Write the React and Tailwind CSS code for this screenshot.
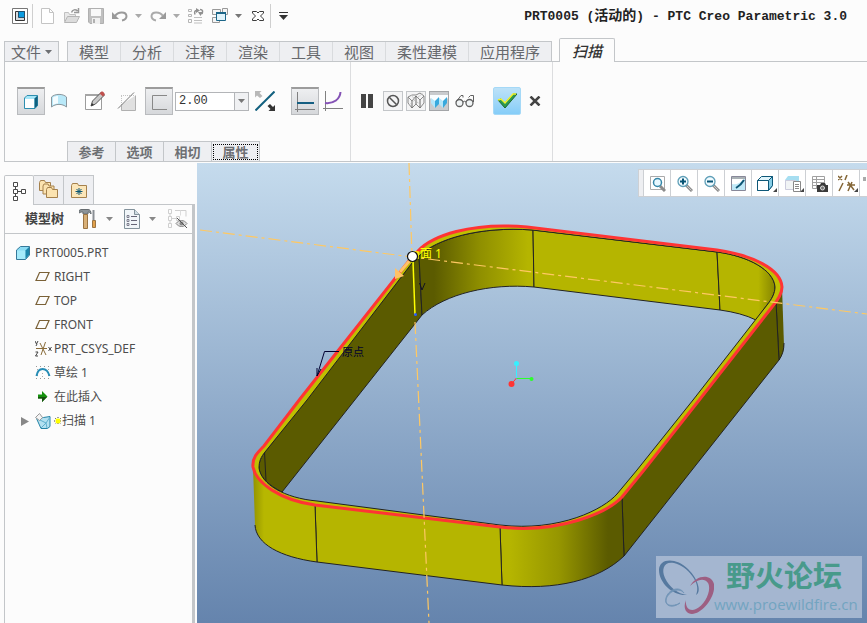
import { useState } from 'react'
import clsx from 'clsx'

const RIBBON_TABS = ['模型', '分析', '注释', '渲染', '工具', '视图', '柔性建模', '应用程序']
const PANEL_TABS = ['参考', '选项', '相切', '属性']

const TREE = [
  { label: 'RIGHT', icon: PlaneIcon },
  { label: 'TOP', icon: PlaneIcon },
  { label: 'FRONT', icon: PlaneIcon },
  { label: 'PRT_CSYS_DEF', icon: CsysIcon },
  { label: '草绘 1', icon: SketchIcon },
  { label: '在此插入', icon: InsertIcon },
  { label: '扫描 1', icon: SweepIcon, expandable: true, fresh: true },
]

const VIEW_TOOLS = [
  { label: '重新调整', icon: RefitIcon },
  { label: '放大', icon: ZoomInIcon },
  { label: '缩小', icon: ZoomOutIcon },
  { label: '重画', icon: RepaintIcon },
  { label: '显示样式', icon: ShadedIcon, menu: true },
  { label: '已保存方向', icon: SavedViewIcon, menu: true },
  { label: '视图管理器', icon: ViewManagerIcon },
  { label: '基准显示过滤器', icon: DatumIcon, menu: true },
]

/* ── Icons ─────────────────────────────────────────────────────────── */

function Svg({ w = 16, h = 16, children }) {
  return (
    <svg width={w} height={h} viewBox={`0 0 ${w} ${h}`} fill="none" className="block shrink-0" aria-hidden="true">
      {children}
    </svg>
  )
}

function Caret({ color = '#8a8a8a' }) {
  return (
    <Svg w={7} h={4}>
      <path d="M0 0h7L3.5 4z" fill={color} />
    </Svg>
  )
}

function AppIcon() {
  return (
    <Svg>
      <path d="M.5.5h15v15H.5z" fill="#fff" stroke="#777" />
      <path d="M3.5 3.5h9v9h-9z" fill="#d5dade" stroke="#333" />
      <path d="M6.500 3.500h6v6h-6z" fill="#0a9be0" stroke="#22506e" />
    </Svg>
  )
}

function NewIcon() {
  return (
    <Svg>
      <path d="M1.500.500h8l4 4v11h-12z" fill="#fff" stroke="#c4c4c4" />
      <path d="M9.500.500v4h4" stroke="#c4c4c4" />
    </Svg>
  )
}

function OpenIcon() {
  return (
    <Svg>
      <path d="M.5 13.500v-9h4l1 2h6v2" fill="#e8e8e8" stroke="#c0c0c0" />
      <path d="M.5 14.500l3-6h12l-3 6z" fill="#dcdcdc" stroke="#b5b5b5" />
      <path d="M7.500 4.500c1-3 4-3.500 6-1.500M14.500 0v4.500H10" stroke="#999" strokeWidth="1.500" />
    </Svg>
  )
}

function SaveIcon() {
  return (
    <Svg>
      <path d="M.5.5h15v15H2L.5 14z" fill="#c0c0c0" stroke="#b0b0b0" />
      <path d="M3 1h10v7H3z" fill="#f8f8f8" />
      <path d="M4 10h8v6H4z" fill="#f0f0f0" />
      <path d="M5 11h2v4H5z" fill="#b0b0b0" />
    </Svg>
  )
}

function UndoIcon() {
  return (
    <Svg>
      <path d="M0 4v7h7z" fill="#9a9a9a" />
      <path d="M3 8c3-4.500 11-5 11.500 0 0 2.500-2 4-4.500 4.500" stroke="#9a9a9a" strokeWidth="2" />
    </Svg>
  )
}

function RedoIcon() {
  return (
    <Svg>
      <path d="M16 4v7H9z" fill="#9a9a9a" />
      <path d="M13 8c-3-4.500-11-5-11.500 0 0 2.500 2 4 4.500 4.500" stroke="#aaa" strokeWidth="2" />
    </Svg>
  )
}

function RegenIcon() {
  return (
    <Svg>
      <path d="M.5 1.500h3v2h-3zM.5 6.500h3v2h-3zM.5 11.500h3v3h-3z" stroke="#b5b5b5" />
      <path d="M6 9.500h8M6 12.500h8M6 15h8" stroke="#c0c0c0" />
      <path d="M7 6.500c-1-3 0-4 2-4M12 1.500c3 0 3 2 2 4.500" stroke="#909090" strokeWidth="1.500" />
      <path d="M8 0l4 2.500L8 5zM10 4h5l-2.500 4z" fill="#909090" />
    </Svg>
  )
}

function WindowsIcon() {
  return (
    <Svg>
      <path d="M.5 1.500h8v5h-8zM10.500.500h5v6h-5zM.5 9.500h7v5h-7z" fill="#f5f5f5" stroke="#999" />
      <path d="M4.500 4.500h9v8h-9z" fill="#e0f3fb" stroke="#1c6688" />
      <path d="M4 5h10" stroke="#1c6688" strokeWidth="2" />
    </Svg>
  )
}

function CloseWindowIcon() {
  return (
    <Svg>
      <path
        d="M2.500 3.500h4L8 5l1.500-1.500h4V5l-3 3 3 3v1.500h-4L8 11l-1.500 1.500h-4V11l3-3-3-3z"
        fill="#fff"
        stroke="#3c3c3c"
      />
    </Svg>
  )
}

function SolidIcon() {
  return (
    <Svg w={18} h={18}>
      <path d="M2.500 5l2.500-2.500h10.500v10L13 15.500H2.500z" fill="#a6e6f8" stroke="#2f8fb0" />
      <path d="M3 6h9v9H3z" fill="#fff" />
      <path d="M12.500 5.500l3-3v10l-3 3z" fill="#11607f" />
    </Svg>
  )
}

function SurfaceIcon() {
  return (
    <Svg w={18} h={18}>
      <path d="M1.500 5C5 1.500 13 1.500 16.500 5v10c-4-3.500-11-3.500-15 0z" fill="#b9e9f9" stroke="#8a979e" />
      <path d="M3 5.500c1.500-1 3-1.500 5-1.500v7.500c-2 0-3.500.5-5 1.500z" fill="#f4fcff" />
    </Svg>
  )
}

function EditSketchIcon() {
  return (
    <Svg w={22} h={22}>
      <path d="M1.500 5.500h16v14h-16z" fill="#fff" stroke="#9c9c9c" />
      <path d="M1 5h17" stroke="#a5a5a5" strokeWidth="2" />
      <path d="M7 16l1.500-5 9-9 3 3-9 9z" fill="#c9c9c9" stroke="#555" />
      <path d="M7 16l1-3 2 2z" fill="#333" />
      <path d="M17 2c1-1.500 4.500 1 3.500 3l-1.500 1.500-3.500-3z" fill="#c0504d" />
    </Svg>
  )
}

function RemoveMaterialIcon() {
  return (
    <Svg w={20} h={20}>
      <path d="M18.500 4.500v15h-14v-6z" fill="#e0e0e0" />
      <path d="M18.500 4.500v15h-14v-5" stroke="#b0b0b0" />
      <path d="M4 4.500h14M4.500 5v9" stroke="#c4c4c4" strokeDasharray="1 1" />
      <path d="M1 17.500L17 1.500" stroke="#777" />
    </Svg>
  )
}

function ThinIcon() {
  return (
    <Svg w={18} h={18}>
      <path d="M17 2.500H2.500v14H17" stroke="#888" />
    </Svg>
  )
}

function FlipIcon() {
  return (
    <Svg w={20} h={20}>
      <path d="M.5 19.500l19-19" stroke="#12607f" strokeWidth="2" />
      <path d="M0 0h6.500L4.500 2l3 3L5 7 2 4.500 0 6.500z" fill="#b8b8b8" />
      <path d="M20 20h-6.500l2-2-3-3L15 13l3 3 2-2z" fill="#333" />
    </Svg>
  )
}

function ConstantSectionIcon() {
  return (
    <Svg w={20} h={20}>
      <path d="M2.500 0v20M0 17.500h20" stroke="#808080" />
      <path d="M2 11h17" stroke="#155f82" strokeWidth="2" />
    </Svg>
  )
}

function VariableSectionIcon() {
  return (
    <Svg w={20} h={20}>
      <path d="M2.500 0v20M0 17.500h20" stroke="#808080" />
      <path d="M2 12c9 1 15-4 15.500-11" stroke="#8452b5" strokeWidth="2" />
    </Svg>
  )
}

function PauseIcon() {
  return (
    <Svg w={12} h={14}>
      <path d="M0 0h5v14H0zM7 0h5v14H7z" fill="#454545" />
    </Svg>
  )
}

function NoPreviewIcon() {
  return (
    <Svg w={18} h={18}>
      <circle cx="9" cy="9" r="5.500" stroke="#555" strokeWidth="1.500" />
      <path d="M5.500 5.500l7 7" stroke="#555" strokeWidth="1.500" />
    </Svg>
  )
}

function WirePreviewIcon() {
  return (
    <Svg w={18} h={18}>
      <path d="M1 5l4-2h4l4-2 4 3M1 5v6l4 5 4-4 4 4 4-5V4l-4 4-4-4-4 5z" stroke="#888" />
      <path d="M5 9v7M9 4v8M13 8v8" stroke="#666" />
      <path d="M4 3l9 10M2 13l14-12" stroke="#bbb" strokeDasharray="2 1" />
    </Svg>
  )
}

function ShadedPreviewIcon() {
  return (
    <Svg w={18} h={18}>
      <path d="M0 3h18v3l-5 5-4-5-4 5-5-5z" fill="#fafdff" />
      <path d="M1 6l4 3v7l-4-5zM9 6l4 3v7l-4-4z" fill="#b4e6fa" />
      <path d="M5 9l4-4v7l-4 4zM13 9l4-4v6l-4 5z" fill="#38a9dd" />
    </Svg>
  )
}

function GlassesIcon() {
  return (
    <Svg w={20} h={14}>
      <circle cx="4.500" cy="9" r="3.500" fill="#f1f5f6" stroke="#606060" strokeWidth="1.300" />
      <circle cx="14.500" cy="9" r="3.500" fill="#f1f5f6" stroke="#606060" strokeWidth="1.300" />
      <path d="M8 8q1.500-1.500 3 0M1 8L6 1.500h2v2M18.500 8V1.500h-3l-2 2" stroke="#606060" />
    </Svg>
  )
}

function CheckIcon() {
  return (
    <Svg w={20} h={16}>
      <path d="M1 7l3-1 4 4L16 1h4L8 15z" fill="#2c9a51" stroke="#20682f" />
      <path d="M1 7l3-1 4 4L16 1h3" stroke="#f3f32c" strokeWidth="1.500" />
    </Svg>
  )
}

function CancelIcon() {
  return (
    <Svg w={12} h={10}>
      <path d="M1.500.500l9 9M10.500.500l-9 9" stroke="#444" strokeWidth="2.500" />
    </Svg>
  )
}

function TreeIcon() {
  return (
    <Svg w={14} h={20}>
      <path d="M1.500 1.500h4v4h-4zM1.500 8.500h4v4h-4zM9.500 8.500h4v4h-4zM1.500 15.500h4v4h-4z" fill="#fff" stroke="#4a4a4a" />
      <path d="M3.500 6v2M3.500 13v2M6 10.500h3" stroke="#4a4a4a" />
    </Svg>
  )
}

function FoldersIcon() {
  return (
    <Svg w={20} h={20}>
      {[0, 3.5, 7].map((d) => (
        <path key={d} d={`M${d + 0.5} ${d + 2.5}l1-2h4l1 2h5v8h-11z`} fill="#fbe3b0" stroke="#a5814c" />
      ))}
    </Svg>
  )
}

function FavoritesIcon() {
  return (
    <Svg w={18} h={16}>
      <path d="M1.500 3.500l1-2h5l1 2h8v12h-15z" fill="#fbe6b9" stroke="#a5814c" />
      <path d="M9 6v7M5.500 9.500h7M6.500 7l5 5M11.500 7l-5 5" stroke="#0a5775" />
    </Svg>
  )
}

function ToolsIcon() {
  return (
    <Svg w={18} h={20}>
      <path d="M0 1.500l2-1h7c2 0 3 1.500 3 4.500-1-1.500-2-2-3-2v2H4v-2H2l-2 1z" fill="#8d9499" stroke="#666c70" />
      <path d="M4.500 5.500h4v14h-4z" fill="#d9b077" stroke="#9b7443" />
      <path d="M14.500 1v10" stroke="#8a8f94" strokeWidth="2" />
      <path d="M13.500 11.500h3v7h-3z" fill="#e2a14a" stroke="#9b7443" />
    </Svg>
  )
}

function ListIcon() {
  return (
    <Svg w={16} h={20}>
      <path d="M.5.5h10l5 5v14H.500z" fill="#f1f6f9" stroke="#83929b" />
      <path d="M10.500.500v5h5" fill="#cfdde4" stroke="#83929b" />
      <path d="M7 7.500h6M7 11.500h6M7 15.500h6" stroke="#667" />
      <path d="M3 6.500h2v2H3zM3 10.500h2v2H3zM3 14.500h2v2H3z" stroke="#667" strokeWidth=".8" />
    </Svg>
  )
}

function HideIcon() {
  return (
    <Svg w={21} h={20}>
      <path d="M1.500.500h3v4h-3zM1.500 7.500h3v4h-3zM1.500 14.500h3v4h-3zM9.500 7.500h3v4h-3zM3 5v2M3 12v2M5 9.500h4M8 1.500h11v6" stroke="#cfcfcf" />
      <path d="M13.500 1.500v5" stroke="#ddd" />
      <path d="M9 14.500c3-4 8-4 11 0-3 4-8 4-11 0z" fill="#ddd" stroke="#888" />
      <circle cx="14.500" cy="14.500" r="2" fill="#888" />
      <path d="M10 9l10 10" stroke="#555" />
    </Svg>
  )
}

function PartIcon() {
  return (
    <Svg w={14} h={14}>
      <path d="M.5 4l4-3.500h9V9l-4 4.500h-9z" fill="#8bdcf4" stroke="#36799a" />
      <path d="M1 4.500h8.500V13H1z" fill="#a5ebfb" />
      <path d="M9.500 4.500l3.500-3.500V9l-3.500 4z" fill="#1d86ab" />
    </Svg>
  )
}

function PlaneIcon() {
  return (
    <Svg>
      <path d="M4.500 3.500h9.500l-3.500 8H1z" stroke="#7a6137" strokeWidth="1.200" />
    </Svg>
  )
}

function CsysIcon() {
  return (
    <Svg w={17} h={16}>
      <path d="M1 7.500h11M5 2l6 12M10.500 1L6 14" stroke="#8a6d3b" />
      <path d="M0 0l1.500 3L3 0M2 3l-1 2M.5 11H3L.5 15H3M13.500 6l3 4M16.500 6l-3 4" stroke="#444" />
    </Svg>
  )
}

function SketchIcon() {
  return (
    <Svg>
      <path d="M1 1.500h14M1 13.500h14" stroke="#999" strokeDasharray="1 3" />
      <path d="M2.500 4v8M13.500 4v8M7.500 8v5" stroke="#aaa" strokeDasharray="1 2" />
      <path d="M1.500 11C3 1.500 12 1.500 14.500 11" stroke="#268cb5" strokeWidth="2" />
    </Svg>
  )
}

function InsertIcon() {
  return (
    <Svg>
      <path d="M3 5.500h4V2l5.500 5.500L7 13V9.500H3z" fill="#15910d" />
      <path d="M3 8h9L7 13V9.500H3z" fill="#17500f" />
    </Svg>
  )
}

function SweepIcon() {
  return (
    <Svg>
      <path d="M1.500 5.500l7-1 6.500-1v10L12.500 15.500H6z" fill="#b3e1f1" stroke="#2583a6" />
      <path d="M3 6l8 4 4-6M11 10l1 5M6 15l5-5" stroke="#5eafcd" />
      <path d="M.5 4.500l4-4 3 4-3 3z" fill="#f4f4f4" stroke="#999" />
    </Svg>
  )
}

function FreshIcon() {
  return (
    <Svg w={8} h={8}>
      <path d="M4 0v8M0 4h8M1 1l6 6M7 1L1 7" stroke="#444" strokeDasharray="1 1" />
      <path d="M4 1.500v5M1.500 4h5M2 2l4 4M6 2L2 6" stroke="#ff0" strokeWidth="1.500" />
    </Svg>
  )
}

function Lens({ children }) {
  return (
    <>
      <path d="M10 10l6 6" stroke="#8c8c8c" strokeWidth="3" />
      <path d="M10.500 10.500l5 5" stroke="#c9c9c9" />
      <circle cx="7" cy="6.500" r="5" fill="#f0fbff" stroke="#5f9fb8" strokeWidth="1.300" />
      {children}
    </>
  )
}

function RefitIcon() {
  return (
    <Svg w={17} h={17}>
      <path d="M1.500 1.500h14v13h-14z" stroke="#aaa" />
      <path d="M11 11l5 5" stroke="#8c8c8c" strokeWidth="3" />
      <circle cx="8.500" cy="7.500" r="4" fill="#e8f8ff" stroke="#3486a8" strokeWidth="1.500" />
    </Svg>
  )
}

function ZoomInIcon() {
  return (
    <Svg w={17} h={17}>
      <Lens><path d="M7 3.500v6M4 6.500h6" stroke="#075374" strokeWidth="2" /></Lens>
    </Svg>
  )
}

function ZoomOutIcon() {
  return (
    <Svg w={17} h={17}>
      <Lens><path d="M4 6.500h6" stroke="#075374" strokeWidth="2" /></Lens>
    </Svg>
  )
}

function RepaintIcon() {
  return (
    <Svg w={17} h={17}>
      <path d="M1.500 1.500h14v14h-14z" fill="#fff" stroke="#889" />
      <path d="M2 2h13v2H2z" fill="#a9b1b5" />
      <path d="M2 15V9c4 1 9-1 12-5h1v11z" fill="#bfe8f7" />
      <path d="M6 13q5-3 8-8" stroke="#0d5574" strokeWidth="2" />
    </Svg>
  )
}

function ShadedIcon() {
  return (
    <Svg w={17} h={17}>
      <path d="M.5 5.500l4-4h11v9l-4 5H.500z" fill="#dff4fb" stroke="#0e5878" />
      <path d="M11.500 5.500l4-4v9l-4 5z" fill="#86cde6" stroke="#0e5878" />
      <path d="M.5 5.500h11v10H.500z" fill="#fff" stroke="#0e5878" />
    </Svg>
  )
}

function SavedViewIcon() {
  return (
    <Svg w={17} h={17}>
      <path d="M1 5l3-4h11v10l-3 3H1z" fill="#a6def1" />
      <path d="M1.500 5.500h10v9h-10z" fill="#f1f4f5" stroke="#ccd" />
      <path d="M9.500 6.500h7v10h-7z" fill="#fff" stroke="#888" />
      <path d="M11 9.500h4M11 11.500h4M11 13.500h4" stroke="#888" />
    </Svg>
  )
}

function ViewManagerIcon() {
  return (
    <Svg w={17} h={17}>
      <path d="M1.500 1.500h12v12h-12zM1 4.500h13M1 7.500h13M1 10.500h13M5.500 1v13" stroke="#a0a0a0" />
      <path d="M6 10h3l1-2h4l1 2h2v7H6z" fill="#3a3a3a" />
      <circle cx="11.500" cy="13" r="2" fill="#777" stroke="#ddd" />
    </Svg>
  )
}

function DatumIcon() {
  return (
    <Svg w={17} h={17}>
      <path d="M0 1l4 4M4 1L0 5M9 0l-2 5M5 8l-4 8M9 10h8M10 16l4-9M10 7l6 8" stroke="#846636" strokeWidth="1.500" />
    </Svg>
  )
}

/* ── Shared controls ───────────────────────────────────────────────── */

function IconButton({ label, className, children }) {
  return (
    <button
      type="button"
      aria-label={label}
      title={label}
      className={clsx('flex shrink-0 items-center justify-center', className)}
    >
      {children}
    </button>
  )
}

function ToolButton({ label, pressed, children }) {
  return (
    <IconButton
      label={label}
      className={clsx(
        'size-7',
        pressed && 'border border-t-2 border-[#b9bbbe] border-t-[#9c9c9c] bg-linear-to-b from-[#eeeff1] to-[#d6d8db]'
      )}
    >
      {children}
    </IconButton>
  )
}

function SplitIcon({ label, color, gap = 'gap-[7px]', children }) {
  return (
    <IconButton label={label} className={gap}>
      {children}
      <Caret color={color} />
    </IconButton>
  )
}

/* ── Header ────────────────────────────────────────────────────────── */

function TitleBar() {
  return (
    <header className="flex h-8 items-center pl-3 pr-5">
      <div className="flex items-center gap-1">
        <IconButton label="PTC Creo"><AppIcon /></IconButton>
        <span className="h-6 w-px bg-[#cfcfcf]" />
      </div>
      <div className="ml-[7px] flex items-center gap-2">
        <IconButton label="新建"><NewIcon /></IconButton>
        <IconButton label="打开"><OpenIcon /></IconButton>
        <IconButton label="保存"><SaveIcon /></IconButton>
        <SplitIcon label="撤消" color="#aaa"><UndoIcon /></SplitIcon>
        <SplitIcon label="重做" color="#aaa"><RedoIcon /></SplitIcon>
        <IconButton label="重新生成"><RegenIcon /></IconButton>
        <SplitIcon label="窗口" color="#777"><WindowsIcon /></SplitIcon>
        <IconButton label="关闭"><CloseWindowIcon /></IconButton>
      </div>
      <span className="ml-1 h-6 w-px bg-[#cfcfcf]" />
      <IconButton label="自定义快速访问工具栏" className="ml-2">
        <Svg w={9} h={8}>
          <path d="M0 .5h9" stroke="#333" />
          <path d="M0 3h9L4.500 8z" fill="#333" />
        </Svg>
      </IconButton>
      <h1 className="ml-auto whitespace-nowrap font-['Liberation_Mono','Noto_Sans_CJK_SC',monospace] text-[13px] font-bold text-[#222]">
        PRT0005 (<span className="text-[14px]">活动的</span>) - PTC Creo Parametric 3.0
      </h1>
    </header>
  )
}

function RibbonTabs() {
  return (
    <nav className="flex h-[29px] items-end pl-1 text-[15px] leading-[18px] text-[#66686c]">
      <button type="button" className="flex h-5 w-[55px] items-center justify-center gap-1 border border-b-0 border-[#c3c6c9] bg-[#eeeff2]">
        文件
        <Caret color="#6d6f73" />
      </button>
      <div className="ml-2 flex h-5 divide-x divide-[#d9dbde] border border-b-0 border-[#c3c6c9] bg-[#eeeff2]">
        {RIBBON_TABS.map((tab) => (
          <button key={tab} type="button" className="px-[11px]">{tab}</button>
        ))}
      </div>
      <button
        type="button"
        className="relative -mb-px ml-[7px] h-6 w-14 rounded-t-xs border border-b-0 border-[#c3c6c9] bg-[#fcfcfc] font-medium italic text-[#333]"
      >
        扫描
      </button>
    </nav>
  )
}

function SweepDashboard() {
  const [thickness, setThickness] = useState('2.00')
  const [panel, setPanel] = useState('属性')

  return (
    <section className="ml-1 flex h-[101px] border-y border-l border-[#c3c6c9]">
      <div className="flex w-[346px] flex-col justify-between border-r border-[#dcdddf] pl-3 pt-[25px]">
        <div className="flex items-center">
          <ToolButton label="扫描为实体" pressed><SolidIcon /></ToolButton>
          <ToolButton label="扫描为曲面"><SurfaceIcon /></ToolButton>
          <div className="ml-2 flex items-center gap-1">
            <ToolButton label="编辑截面"><EditSketchIcon /></ToolButton>
            <ToolButton label="移除材料"><RemoveMaterialIcon /></ToolButton>
            <ToolButton label="薄板特征" pressed><ThinIcon /></ToolButton>
          </div>
          <div className="mx-[2px] flex h-[19px] w-[74px] border border-[#b3b5b8]">
            <input
              aria-label="厚度"
              value={thickness}
              onChange={(e) => setThickness(e.target.value)}
              className="min-w-0 flex-1 bg-white pl-[3px] font-['Liberation_Mono',monospace] text-[12px] text-[#333] outline-none"
            />
            <IconButton label="厚度列表" className="w-[14px] border-l border-[#b3b5b8] bg-[#f0f1f3]">
              <Caret color="#777" />
            </IconButton>
          </div>
          <ToolButton label="反向"><FlipIcon /></ToolButton>
          <div className="ml-3 flex">
            <ToolButton label="恒定截面" pressed><ConstantSectionIcon /></ToolButton>
            <ToolButton label="可变截面"><VariableSectionIcon /></ToolButton>
          </div>
        </div>
        <div className="ml-[50px] flex text-[13px] font-bold leading-4 text-[#6d6f73]">
          {PANEL_TABS.map((tab) => (
            <button
              key={tab}
              type="button"
              onClick={() => setPanel(tab)}
              className="-mr-px h-5 w-[49px] border border-b-0 border-[#c3c6c9] bg-[#eeeff2] p-px"
            >
              <span
                className={clsx(
                  'flex h-4 items-center justify-center border border-dotted',
                  panel === tab ? 'border-black' : 'border-transparent'
                )}
              >
                {tab}
              </span>
            </button>
          ))}
        </div>
      </div>

      <div className="flex w-[202px] items-center self-stretch border-r border-[#dcdddf] pb-[21px] pl-[6px]">
        <IconButton label="暂停" className="size-5"><PauseIcon /></IconButton>
        <div className="ml-[6px] flex gap-[3px]">
          <IconButton label="无预览" className="size-5 border border-[#c3c6c9] bg-[#f4f4f5]"><NoPreviewIcon /></IconButton>
          <IconButton label="分离预览" className="size-5 border border-[#c3c6c9] bg-[#f4f4f5]"><WirePreviewIcon /></IconButton>
          <IconButton label="连接预览" className="size-5 border border-[#a3a5a8] bg-[#c9cbce]"><ShadedPreviewIcon /></IconButton>
        </div>
        <IconButton label="校验" className="ml-1 h-5 w-6"><GlassesIcon /></IconButton>
        <IconButton
          label="确定"
          className="ml-4 size-7 rounded-xs border border-[#a5d9f7] bg-linear-to-b from-[#bde2f8] to-[#85cdf8]"
        >
          <CheckIcon />
        </IconButton>
        <IconButton label="取消" className="ml-2 h-7"><CancelIcon /></IconButton>
      </div>
    </section>
  )
}

/* ── Model tree ────────────────────────────────────────────────────── */

function ModelTree() {
  return (
    <aside className="flex w-[195px] shrink-0 flex-col pl-1 pt-3">
      <div className="flex h-[29px] items-end">
        <IconButton label="模型树" className="relative -mb-px h-[30px] w-[30px] rounded-t-xs border border-b-0 border-[#c3c6c9] bg-[#fcfcfc]">
          <TreeIcon />
        </IconButton>
        <IconButton label="文件夹浏览器" className="h-[29px] w-[30px] border border-b-0 border-l-0 border-[#c3c6c9] bg-[#eeeff2]">
          <FoldersIcon />
        </IconButton>
        <IconButton label="收藏夹" className="h-[29px] w-[30px] border border-b-0 border-l-0 border-[#c3c6c9] bg-[#eeeff2]">
          <FavoritesIcon />
        </IconButton>
      </div>

      <div className="flex flex-1 flex-col border-l border-r-3 border-t border-[#c3c6c9]">
        <div className="flex h-[29px] items-center border-b border-[#c3c6c9] pl-5 pr-1">
          <h2 className="whitespace-nowrap text-[13px] font-bold text-[#444]">模型树</h2>
          <div className="ml-auto flex items-center gap-[11px]">
            <SplitIcon label="设置" color="#888" gap="gap-[9px]"><ToolsIcon /></SplitIcon>
            <SplitIcon label="显示" color="#888" gap="gap-[9px]"><ListIcon /></SplitIcon>
            <IconButton label="隐藏"><HideIcon /></IconButton>
          </div>
        </div>

        <div className="pt-[7px] text-[12px] leading-6 text-[#4d4d4d]">
          <div className="flex h-6 items-center gap-[5px] pl-[11px]">
            <PartIcon />
            PRT0005.PRT
          </div>
          <ul>
            {TREE.map(({ label, icon: Icon, expandable, fresh }) => (
              <li key={label} className="flex h-6 items-center pl-4">
                <span className="w-[14px]">
                  {expandable && (
                    <Svg w={8} h={9}>
                      <path d="M0 0l8 4.500L0 9z" fill="#888" />
                    </Svg>
                  )}
                </span>
                <span className="mr-[2px] w-[17px]"><Icon /></span>
                {fresh && <FreshIcon />}
                {label}
              </li>
            ))}
          </ul>
        </div>
      </div>
    </aside>
  )
}

/* ── Graphics area ─────────────────────────────────────────────────── */

const RIM_OUTER =
  'M412 257L418 251C432 236 470 222 527 227L717 250C752 255 781 269 782 287C782 294 778 300 772 307L700 399L644 470L622 497C608 512 560 534 500 527L315 505C280 500 256 483 253 467C252 458 257 453 264 446L300 399Z'
const RIM_INNER =
  'M412 263L419 256C436 239 480 226 532 230L717 252C748 256 774 270 775 287C775 293 772 299 767 305L693 400L637 470L617 494C604 509 560 532 500 525L317 501C284 498 261 484 259 468C259 461 261 457 265 452L307 400Z'

function Model() {
  return (
    <svg
      viewBox="197 163 670 460"
      preserveAspectRatio="xMidYMid slice"
      className="absolute inset-0 h-full w-full"
      fill="none"
      role="img"
      aria-label="PRT0005"
    >
      <defs>
        <linearGradient id="backCorner" gradientUnits="userSpaceOnUse" x1="434" y1="0" x2="528" y2="0">
          <stop stopColor="#5b5b00" />
          <stop offset="0.5" stopColor="#909000" />
          <stop offset="1" stopColor="#b5b500" />
        </linearGradient>
        <linearGradient id="rightCorner" gradientUnits="userSpaceOnUse" x1="717" y1="0" x2="776" y2="0">
          <stop stopColor="#b5b500" />
          <stop offset="0.7" stopColor="#b5b500" />
          <stop offset="1" stopColor="#828200" />
        </linearGradient>
        <linearGradient id="leftCorner" gradientUnits="userSpaceOnUse" x1="253" y1="0" x2="264" y2="0">
          <stop stopColor="#939300" />
          <stop offset="1" stopColor="#b7b700" />
        </linearGradient>
        <linearGradient id="frontCorner" gradientUnits="userSpaceOnUse" x1="510" y1="0" x2="608" y2="0">
          <stop stopColor="#b5b500" />
          <stop offset="0.5" stopColor="#969600" />
          <stop offset="1" stopColor="#5b5b00" />
        </linearGradient>
      </defs>

      {/* inside walls */}
      <g stroke="#222">
        <path d="M265 452L412 263L419 256L422 315L282 492C270 486 260 478 259 468C259 461 261 457 265 452Z" fill="#5b5b00" />
        <path d="M419 256C436 239 480 226 533 230L534 287C490 283 445 294 422 315Z" fill="url(#backCorner)" />
        <path d="M533 230L717 252L720 310L534 287Z" fill="#b5b500" />
        <path d="M717 252C748 256 774 270 775 287C775 293 772 299 767 305L756 320C746 315 734 312 720 310Z" fill="url(#rightCorner)" />
        <path d="M264.500 452L266 481" />
      </g>

      {/* outside walls */}
      <g stroke="#222">
        <path d="M782 287L784 346Q784 353 779 360L776 302Z" fill="#5b5b00" stroke="none" />
        <path d="M784 343Q784 353 779 360L776 302" />
        <path d="M776 302L779 360L624 556L622 497L644 470L700 399Z" fill="#5b5b00" />
        <path d="M622 497L624 556C599 580 556 591 502 585L500 527C560 534 608 512 622 497Z" fill="url(#frontCorner)" />
        <path d="M500 527L502 585L317 562L315 505Z" fill="#b5b500" />
        <path d="M315 505L317 562C280 557 256 544 255 525L253 467C256 483 280 500 315 505Z" fill="url(#leftCorner)" stroke="none" />
        <path d="M315 505L317 562C280 557 256 544 255 525" />
      </g>

      <path d={RIM_OUTER + RIM_INNER} fill="#bfbf00" fillRule="evenodd" />
      <path d={RIM_INNER} stroke="#222" />
      <path d={RIM_OUTER} stroke="#ff3434" strokeWidth="3" />

      {/* datum axes */}
      <g stroke="#ffc862" strokeDasharray="12 4 3 4" strokeWidth="1.200">
        <path d="M409 163L412 257M415 322L429 623M200 230L412 257L867 314" />
      </g>

      {/* section start */}
      <path d="M411 259L400 272" stroke="#ffc266" strokeWidth="3" />
      <path d="M395 279v-11l9 8z" fill="#ffc266" />
      <path d="M413 261L415 315" stroke="#ff0" strokeWidth="1.500" />
      <circle cx="415.500" cy="314.500" r="1.500" fill="#2b5bff" />
      <text x="420" y="258" fill="#ff0" className="text-[12px]">面 1</text>
      <path d="M413 252h5v7" stroke="#ff0" strokeWidth="1.500" />
      <circle cx="412.500" cy="256.500" r="5" fill="#fff" stroke="#111" strokeWidth="1.200" />
      <path d="M419.500 283l2.500 7 3-7" stroke="#112" />

      {/* origin note */}
      <path d="M339 351.500H324.500L317 376M317 376v-8M317 376l4-7" stroke="#000030" />
      <text x="342" y="356" fill="#000030" className="text-[11px]">原点</text>

      {/* spin center */}
      <path d="M516.500 378V365" stroke="#36f0ff" />
      <path d="M516.500 378l-5 6" stroke="#ff3434" />
      <path d="M517 378.500h14" stroke="#2bff2b" />
      <circle cx="516.500" cy="363.500" r="2.500" fill="#36f0ff" />
      <circle cx="511.500" cy="384" r="3" fill="#ff3434" />
      <circle cx="531.500" cy="379" r="2" fill="#2bff2b" />
    </svg>
  )
}

function ViewToolbar() {
  return (
    <div className="absolute right-0 top-[6px] flex h-7 border border-r-0 border-[#cdd0d4] bg-white">
      <span className="w-1 bg-[#eeeff2]" />
      {VIEW_TOOLS.map(({ label, icon: Icon, menu }) => (
        <IconButton key={label} label={label} className="relative w-[27px] border-l border-[#cdd0d4]">
          <Icon />
          {menu && (
            <span className="absolute bottom-1 right-px">
              <Svg w={4} h={4}><path d="M4 0v4H0z" fill="#444" /></Svg>
            </span>
          )}
        </IconButton>
      ))}
      <IconButton label="更多" className="w-2 border-l border-[#cdd0d4]">
        <Svg w={4} h={16}><path d="M1 2h3v4H1z" fill="#aaa" /></Svg>
      </IconButton>
    </div>
  )
}

function Watermark() {
  return (
    <div className="absolute bottom-[5px] right-[5px] flex h-[62px] w-[206px] bg-[#a4b6d0]">
      <Svg w={58} h={62}>
        <g fillRule="evenodd">
          <path
            d="M3 14C3 2 20 1 32 13C42 23 46 36 40 39C46 27 31 10 18 7C8 5 5 13 9 22C13 31 22 38 31 39C17 40 3 27 3 14Z"
            fill="#56799f"
          />
          <path
            d="M34 30C40 19 55 17 58 28C60 41 46 58 36 58C29 58 27 51 30 44C29 52 34 56 40 53C49 49 56 34 52 27C48 21 40 24 34 30Z"
            fill="#9d5f82"
          />
          <path
            d="M28 37C22 30 11 37 10 44C9 50 17 51 24 47C16 53 8 50 10 42C12 34 23 29 28 37Z"
            fill="#6b90b3"
            stroke="#7496b8"
          />
        </g>
      </Svg>
      <div className="flex flex-1 flex-col items-start whitespace-nowrap">
        <span className="pl-3 text-[29px] font-bold leading-[40px] text-[#489a8b]">野火论坛</span>
        <span className="font-['Open_Sans',sans-serif] text-[15px] leading-[16px] text-[#72a4c0]">
          www.proewildfire.cn
        </span>
      </div>
    </div>
  )
}

export default function App() {
  return (
    <div className="flex min-h-screen flex-col bg-[#fcfcfc] font-['Noto_Sans','Noto_Sans_CJK_SC',sans-serif]">
      <TitleBar />
      <RibbonTabs />
      <SweepDashboard />
      <main className="mt-px flex flex-1 gap-[2px]">
        <ModelTree />
        <div className="relative flex-1 overflow-hidden bg-linear-to-b from-[#c5dbed] to-[#6584ad]">
          <Model />
          <ViewToolbar />
          <Watermark />
        </div>
      </main>
    </div>
  )
}
